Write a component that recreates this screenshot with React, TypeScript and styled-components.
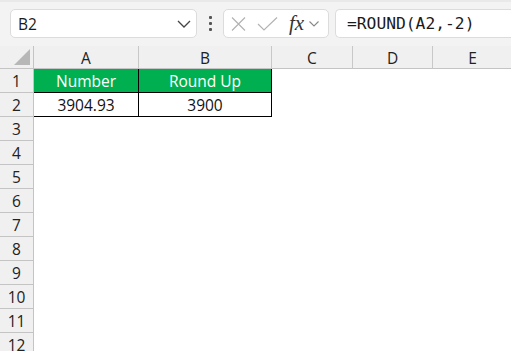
import styled, { createGlobalStyle } from "styled-components";

const GlobalStyle = createGlobalStyle`
  html, body {
    margin: 0;
    padding: 0;
    background: #ffffff;
    overflow: hidden;
  }
  body {
    font-family: "Open Sans", "Liberation Sans", sans-serif;
  }
`;

const COLUMNS = ["A", "B", "C", "D", "E"];
const COLUMN_WIDTHS = [105, 133, 81, 80, 80];
const ROW_COUNT = 12;

const Page = styled.div`
  width: 511px;
  height: 351px;
  display: flex;
  flex-flow: column;
  overflow: hidden;
`;

const FormulaBar = styled.div`
  height: 46px;
  flex-shrink: 0;
  box-sizing: border-box;
  display: flex;
  align-items: center;
  padding: 0 0 1px 10px;
  background: #f3f3f3;
  border-top: 2px solid #e9e9e9;
`;

const Field = styled.div<{ $width?: number }>`
  height: 29px;
  box-sizing: border-box;
  display: flex;
  align-items: center;
  background: #ffffff;
  border: 1px solid #dcdcdc;
  border-radius: 5px;
  ${({ $width }) => ($width ? `width: ${$width}px;` : "flex: 1; border-right: none; border-radius: 5px 0 0 5px;")}
`;

const NameText = styled.span`
  flex: 1;
  padding-left: 7px;
  font-size: 15.5px;
  color: #1a1a1a;
`;

const Chevron = styled.svg`
  flex-shrink: 0;
`;

const Dots = styled.div`
  width: 26px;
  display: flex;
  flex-flow: column;
  align-items: center;
  gap: 3px;

  > span {
    width: 3px;
    height: 3px;
    background: #555555;
    border-radius: 1px;
  }
`;

const IconGroup = styled.div`
  display: flex;
  align-items: center;
  gap: 10px;
  padding-left: 6px;
`;

const Fx = styled.span`
  font-family: "Liberation Serif", "DejaVu Serif", serif;
  font-style: italic;
  font-size: 21px;
  color: #333333;
  margin-left: 1px;
  margin-right: -5px;
  line-height: 1;
`;

const FormulaText = styled.span`
  padding-left: 11px;
  font-family: "DejaVu Sans Mono", "Liberation Mono", monospace;
  font-size: 16.3px;
  color: #1a1a1a;
`;

const Gap = styled.div<{ $width: number }>`
  width: ${({ $width }) => $width}px;
  flex-shrink: 0;
`;

const Sheet = styled.div`
  display: grid;
  grid-template-columns: 34px ${COLUMN_WIDTHS.map((w) => `${w}px`).join(" ")};
  grid-template-rows: 23px;
  grid-auto-rows: 24px;
  font-size: 15.5px;
`;

const Corner = styled.div`
  position: relative;
  background: #f0f0f0;
  box-sizing: border-box;
  border-right: 1px solid #c4c4c4;
  border-bottom: 1px solid #c4c4c4;

  &::after {
    content: "";
    position: absolute;
    right: 3px;
    bottom: 3px;
    width: 0;
    height: 0;
    border-left: 16px solid transparent;
    border-bottom: 16px solid #b7b7b7;
  }
`;

const ColumnHeader = styled.div`
  background: #f0f0f0;
  box-sizing: border-box;
  border-right: 1px solid #c8c8c8;
  border-bottom: 1px solid #c4c4c4;
  display: flex;
  align-items: center;
  justify-content: center;
  color: #222222;
  padding-top: 1px;
`;

const RowHeader = styled.div`
  background: #f0f0f0;
  box-sizing: border-box;
  border-right: 1px solid #c4c4c4;
  border-bottom: 1px solid #c4c4c4;
  display: flex;
  align-items: center;
  justify-content: center;
  color: #222222;
`;

const Cell = styled.div<{ $variant?: "title" | "value" }>`
  box-sizing: border-box;
  display: flex;
  align-items: center;
  justify-content: center;
  ${({ $variant }) =>
    $variant === "title" &&
    `
    background: #00b050;
    color: #ffffff;
    border-right: 1px solid #000000;
    border-bottom: 1px solid #000000;
  `}
  ${({ $variant }) =>
    $variant === "value" &&
    `
    background: #ffffff;
    color: #111111;
    border-right: 1px solid #000000;
    border-bottom: 1px solid #000000;
  `}
`;

const DATA: Record<number, { text: string; variant: "title" | "value" }[]> = {
  1: [
    { text: "Number", variant: "title" },
    { text: "Round Up", variant: "title" },
  ],
  2: [
    { text: "3904.93", variant: "value" },
    { text: "3900", variant: "value" },
  ],
};

const ChevronIcon = ({ color }: { color: string }) => (
  <Chevron width="14" height="8" viewBox="0 0 14 8">
    <path d="M1 1 L7 7 L13 1" fill="none" stroke={color} strokeWidth="1.3" />
  </Chevron>
);

const App = () => {
  const rows = Array.from({ length: ROW_COUNT }, (_, i) => i + 1);

  return (
    <>
      <GlobalStyle />
      <Page>
        <FormulaBar>
          <Field $width={187}>
            <NameText>B2</NameText>
            <ChevronIcon color="#444444" />
            <Gap $width={5} />
          </Field>
          <Dots>
            <span />
            <span />
            <span />
          </Dots>
          <Field $width={106}>
            <IconGroup>
              <svg width="17" height="14" viewBox="0 0 17 14">
                <path d="M2 0.5 L15 13.5 M15 0.5 L2 13.5" stroke="#b3b3b3" strokeWidth="1.2" fill="none" />
              </svg>
              <svg width="21" height="14" viewBox="0 0 21 14">
                <path d="M1 7 L7 13 L20 0.5" stroke="#b3b3b3" strokeWidth="1.2" fill="none" />
              </svg>
              <Fx>fx</Fx>
              <svg width="10" height="6" viewBox="0 0 10 6">
                <path d="M0.5 0.5 L5 5 L9.5 0.5" stroke="#888888" strokeWidth="1.1" fill="none" />
              </svg>
            </IconGroup>
          </Field>
          <Gap $width={6} />
          <Field>
            <FormulaText>=ROUND(A2,-2)</FormulaText>
          </Field>
        </FormulaBar>
        <Sheet>
          <Corner />
          {COLUMNS.map((c) => (
            <ColumnHeader key={`col-${c}`}>{c}</ColumnHeader>
          ))}
          {rows.map((r) => (
            <>
              <RowHeader key={`row-${r}`}>{r}</RowHeader>
              {COLUMNS.map((c, ci) => {
                const cell = DATA[r]?.[ci];
                return (
                  <Cell key={`cell-${c}${r}`} $variant={cell?.variant}>
                    {cell?.text}
                  </Cell>
                );
              })}
            </>
          ))}
        </Sheet>
      </Page>
    </>
  );
};

export default App;
